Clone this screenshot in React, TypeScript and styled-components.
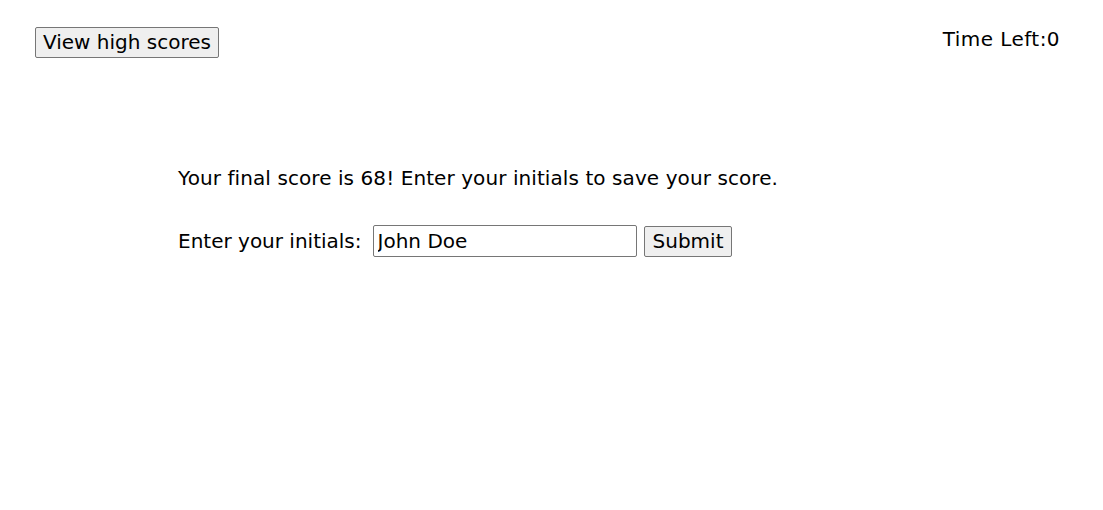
import styled, { createGlobalStyle } from "styled-components";

const GlobalStyle = createGlobalStyle`
  body {
    margin: 0;
    background: #ffffff;
    color: #000000;
    font-family: "DejaVu Sans", "Liberation Sans", sans-serif;
  }
`;

const Page = styled.div`
  width: 1103px;
  height: 510px;
`;

const Header = styled.header`
  display: flex;
  justify-content: space-between;
  align-items: flex-start;
  padding: 27px 43px 0 35px;
`;

const Button = styled.button<{ $wide?: boolean }>`
  font-family: inherit;
  font-size: 20px;
  line-height: 25px;
  color: #000;
  background: #efefef;
  border: 1px solid #767676;
  border-radius: 2px;
  padding: ${(p) => (p.$wide ? "2px 8px" : "2px 7px")};
  margin: 0;
`;

const Timer = styled.div`
  font-size: 20px;
  line-height: 25px;
  letter-spacing: 0.45px;
`;

const Main = styled.main`
  padding: 108px 0 0 178px;
`;

const Message = styled.p`
  font-size: 20px;
  line-height: 25px;
  letter-spacing: 0.08px;
  margin: 0 0 34px;
`;

const Form = styled.form`
  display: flex;
  align-items: center;
  gap: 7px;
  font-size: 20px;
`;

const Label = styled.label`
  margin-right: 4px;
`;

const Input = styled.input`
  font-family: inherit;
  font-size: 20px;
  width: 264px;
  height: 32px;
  box-sizing: border-box;
  padding: 1px 4px;
  border: 1px solid #767676;
  border-radius: 2px;
  color: #000;
`;

export default function App() {
  return (
    <Page>
      <GlobalStyle />
      <Header>
        <Button type="button">View high scores</Button>
        <Timer>Time Left:0</Timer>
      </Header>
      <Main>
        <Message>Your final score is 68! Enter your initials to save your score.</Message>
        <Form onSubmit={(e) => e.preventDefault()}>
          <Label htmlFor="initials">Enter your initials:</Label>
          <Input id="initials" defaultValue="John Doe" />
          <Button type="submit" $wide>
            Submit
          </Button>
        </Form>
      </Main>
    </Page>
  );
}
